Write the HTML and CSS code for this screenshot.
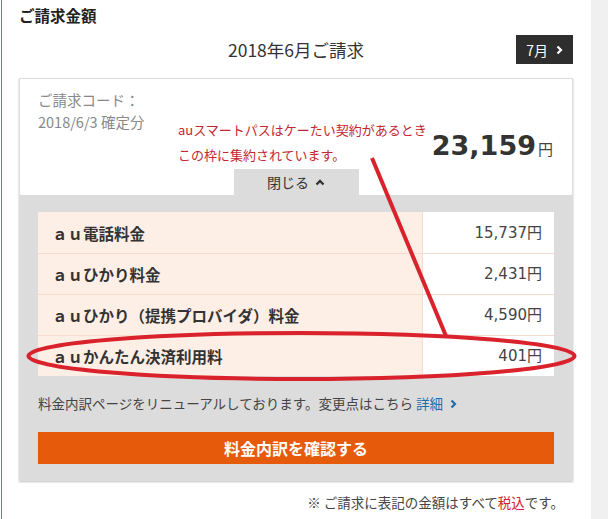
FILE: index.html
```html
<!DOCTYPE html>
<html lang="ja">
<head>
  <meta charset="UTF-8">
  <meta name="viewport" content="width=device-width, initial-scale=1.0">
  <title>ご請求金額</title>
  <link rel="stylesheet" href="styles.css">
</head>
<body>
  <div class="page">
    <main class="main">
      <h2 class="title">ご請求金額</h2>

      <div class="month-bar">
        <span></span>
        <div class="month">2018年6月ご請求</div>
        <a class="next" href="#">7月
          <svg width="7" height="10" viewBox="0 0 7 10"><polyline points="1.5,1.5 5,5 1.5,8.5" fill="none" stroke="#fff" stroke-width="2.2"/></svg>
        </a>
      </div>

      <section class="card">
        <div class="summary">
          <div class="summary-row">
            <div class="code">ご請求コード：<br>2018/6/3 確定分</div>
            <div class="total"><span class="total-num">23,159</span><span class="yen">円</span></div>
          </div>
          <button class="toggle">閉じる
            <svg width="10" height="7" viewBox="0 0 10 7"><polyline points="1.5,5.5 5,2 8.5,5.5" fill="none" stroke="#333" stroke-width="2.4"/></svg>
          </button>
        </div>

        <div class="detail">
          <table class="items">
            <tr><th>ａｕ電話料金</th><td>15,737円</td></tr>
            <tr><th>ａｕひかり料金</th><td>2,431円</td></tr>
            <tr><th>ａｕひかり（提携プロバイダ）料金</th><td>4,590円</td></tr>
            <tr><th>ａｕかんたん決済利用料</th><td>401円</td></tr>
          </table>

          <p class="notice">料金内訳ページをリニューアルしております。変更点はこちら <a class="more" href="#">詳細
            <svg width="7" height="10" viewBox="0 0 7 10"><polyline points="1.5,1.5 5,5 1.5,8.5" fill="none" stroke="#1f6db0" stroke-width="2.2"/></svg></a></p>

          <a class="confirm" href="#">料金内訳を確認する</a>
        </div>
      </section>

      <p class="footnote">※ ご請求に表記の金額はすべて<span class="tax">税込</span>です。</p>
    </main>
    <div class="side"></div>

    <!-- 書き込み注釈 -->
    <p class="memo">auスマートパスはケーたい契約があるとき<br>この枠に集約されています。</p>
    <svg class="markup" width="608" height="519" viewBox="0 0 608 519">
      <line x1="372" y1="158" x2="446" y2="336" stroke="#d9222b" stroke-width="4"/>
      <ellipse cx="301.5" cy="356" rx="273" ry="23" fill="none" stroke="#d9222b" stroke-width="4"/>
    </svg>
  </div>
</body>
</html>
```

FILE: styles.css
```css
body {
  margin: 0;
  background: #fff;
  color: #333;
  font-family: "Noto Sans CJK JP", sans-serif;
}
.page {
  position: relative;
  display: flex;
  width: 608px;
  height: 519px;
  overflow: hidden;
}
.main {
  margin-left: 1px;
  width: 554px;
  padding: 0 18px 0 17px;
  border-left: 1px solid #3c98a8;
}
.side {
  flex: 1;
  background: #f0f0f0;
}
.title {
  margin: 0;
  padding-top: 5px;
  font-size: 15.5px;
  line-height: 20px;
  font-weight: bold;
  color: #222;
}
.month-bar {
  display: grid;
  grid-template-columns: 1fr auto 1fr;
  align-items: center;
  margin-top: 10px;
  height: 29px;
}
.month {
  font-size: 17.5px;
  line-height: 29px;
  color: #333;
}
.next {
  justify-self: end;
  display: flex;
  align-items: center;
  gap: 8px;
  height: 29px;
  padding: 0 10px;
  background: #2e2e2e;
  color: #fff;
  font-size: 14px;
  text-decoration: none;
}
.card {
  margin-top: 14px;
  border: 1px solid #dcdcdc;
  box-shadow: 0 1px 2px rgba(0, 0, 0, 0.25);
}
.summary {
  display: flex;
  flex-direction: column;
  align-items: center;
  background: #fff;
}
.summary-row {
  display: flex;
  justify-content: space-between;
  align-self: stretch;
  height: 90px;
  padding: 0 19px 0 18px;
}
.code {
  padding-top: 10px;
  font-size: 14.5px;
  line-height: 22px;
  color: #888;
}
.total {
  margin-top: 50px;
  line-height: 34px;
  white-space: nowrap;
}
.total-num {
  font-family: "DejaVu Sans", sans-serif;
  font-size: 27px;
  font-weight: bold;
  color: #333;
}
.yen {
  margin-left: 2px;
  font-size: 15px;
  color: #444;
}
.toggle {
  display: flex;
  align-items: center;
  justify-content: center;
  gap: 6px;
  width: 125px;
  height: 26px;
  padding: 0;
  border: none;
  background: #dcdcdc;
  color: #333;
  font-family: "Noto Sans CJK JP", sans-serif;
  font-size: 14px;
}
.detail {
  padding: 17px 18px 16px 18px;
  background: #dcdcdc;
}
.items {
  width: 100%;
  border-collapse: collapse;
}
.items th,
.items td {
  height: 40px;
  border-top: 1px solid #f6dccf;
  font-size: 15.5px;
  line-height: 20px;
}
.items tr:first-child th,
.items tr:first-child td {
  border-top: none;
  height: 41px;
}
.items th {
  padding: 0 0 0 14px;
  background: #fdeee6;
  text-align: left;
  font-weight: bold;
  color: #333;
}
.items td {
  width: 119px;
  padding: 0 12px 0 0;
  border-left: 1px solid #f6dccf;
  background: #fff;
  text-align: right;
  font-family: "DejaVu Sans", "Noto Sans CJK JP", sans-serif;
  font-size: 15px;
  color: #444;
}
.notice {
  margin: 17px 0 0;
  font-size: 13.5px;
  line-height: 20px;
  color: #444;
}
.more {
  color: #1f6db0;
  text-decoration: none;
}
.more svg {
  margin-left: 4px;
}
.confirm {
  display: block;
  margin-top: 19px;
  height: 32px;
  background: #e65a0b;
  color: #fff;
  font-size: 16px;
  font-weight: bold;
  line-height: 32px;
  text-align: center;
  text-decoration: none;
}
.footnote {
  margin: 11px 9px 0 0;
  font-size: 13.5px;
  line-height: 20px;
  text-align: right;
  color: #444;
}
.tax {
  color: #d1232c;
}
.memo {
  position: absolute;
  left: 178px;
  top: 117px;
  margin: 0;
  font-size: 13px;
  line-height: 25px;
  color: #c4262e;
}
.markup {
  position: absolute;
  left: 0;
  top: 0;
  pointer-events: none;
}
```
